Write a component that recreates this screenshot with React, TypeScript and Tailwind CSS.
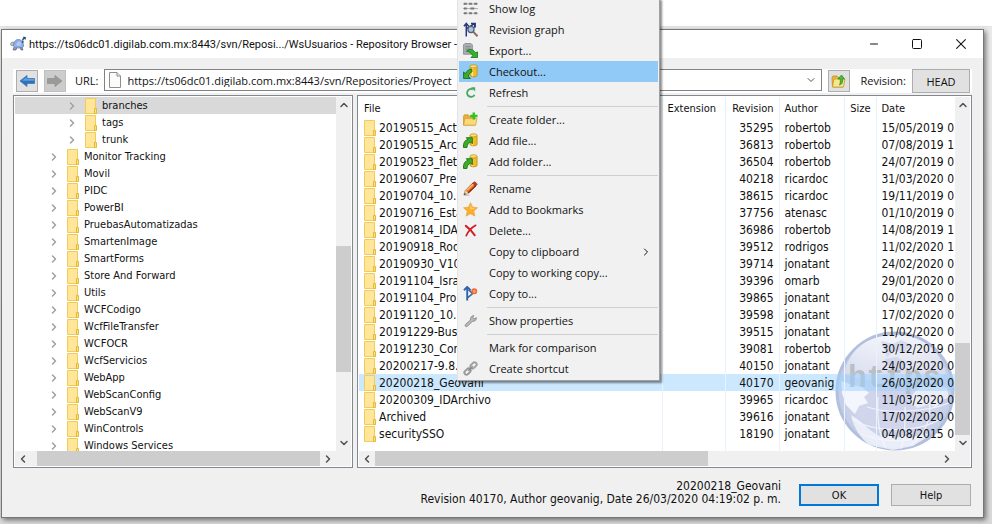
import { useState } from 'react'
import type { ReactNode } from 'react'
import { ChevronDown, ChevronLeft, ChevronRight, ChevronUp, Minus, Square, X } from 'lucide-react'


// types
type TreeNode = {
   name: string,
   level: number
}

type FileRow = {
   name: string,
   revision: number,
   author: string,
   date: string
}

type MenuItem = {
   label: string,
   icon?: ReactNode,
   submenu?: boolean
}


// - DATA -
const treeNodes: TreeNode[] = [
   { name: 'branches', level: 2 },
   { name: 'tags', level: 2 },
   { name: 'trunk', level: 2 },
   { name: 'Monitor Tracking', level: 1 },
   { name: 'Movil', level: 1 },
   { name: 'PIDC', level: 1 },
   { name: 'PowerBI', level: 1 },
   { name: 'PruebasAutomatizadas', level: 1 },
   { name: 'SmartenImage', level: 1 },
   { name: 'SmartForms', level: 1 },
   { name: 'Store And Forward', level: 1 },
   { name: 'Utils', level: 1 },
   { name: 'WCFCodigo', level: 1 },
   { name: 'WcfFileTransfer', level: 1 },
   { name: 'WCFOCR', level: 1 },
   { name: 'WcfServicios', level: 1 },
   { name: 'WebApp', level: 1 },
   { name: 'WebScanConfig', level: 1 },
   { name: 'WebScanV9', level: 1 },
   { name: 'WinControls', level: 1 },
   { name: 'Windows Services', level: 1 },
]

const files: FileRow[] = [
   { name: '20190515_Act', revision: 35295, author: 'robertob', date: '15/05/2019 0' },
   { name: '20190515_Arc', revision: 36813, author: 'robertob', date: '07/08/2019 1' },
   { name: '20190523_flet', revision: 36504, author: 'robertob', date: '24/07/2019 0' },
   { name: '20190607_Pre', revision: 40218, author: 'ricardoc', date: '31/03/2020 0' },
   { name: '20190704_10.', revision: 38615, author: 'ricardoc', date: '19/11/2019 0' },
   { name: '20190716_Esta', revision: 37756, author: 'atenasc', date: '01/10/2019 0' },
   { name: '20190814_IDA', revision: 36986, author: 'robertob', date: '14/08/2019 1' },
   { name: '20190918_Rod', revision: 39512, author: 'rodrigos', date: '11/02/2020 1' },
   { name: '20190930_V10', revision: 39714, author: 'jonatant', date: '24/02/2020 0' },
   { name: '20191104_Isra', revision: 39396, author: 'omarb', date: '29/01/2020 0' },
   { name: '20191104_Pro', revision: 39865, author: 'jonatant', date: '04/03/2020 0' },
   { name: '20191120_10.', revision: 39598, author: 'jonatant', date: '17/02/2020 0' },
   { name: '20191229-Busc', revision: 39515, author: 'jonatant', date: '11/02/2020 0' },
   { name: '20191230_Con', revision: 39081, author: 'robertob', date: '30/12/2019 0' },
   { name: '20200217-9.8.', revision: 40150, author: 'jonatant', date: '24/03/2020 0' },
   { name: '20200218_Geovani', revision: 40170, author: 'geovanig', date: '26/03/2020 0' },
   { name: '20200309_IDArchivo', revision: 39965, author: 'ricardoc', date: '11/03/2020 0' },
   { name: 'Archived', revision: 39616, author: 'jonatant', date: '17/02/2020 0' },
   { name: 'securitySSO', revision: 18190, author: 'jonatant', date: '04/08/2015 0' },
]


// - ICONS -
function FolderIcon() {
   return (
      <svg className='h-4 w-3 shrink-0' viewBox='0 0 12 16'>
         <path d='M.5.5h10v15H.5z' fill='#ffe694' stroke='#efcc5c' />
         <path d='M2 2h7v12H2z' fill='#ffe69a' />
         <path d='M9.5 15.5v-5h2v5z' fill='#ffe07a' stroke='#e3b93a' />
      </svg>
   )
}

function TurtleIcon() {
   return (
      <svg className='h-4 w-4 shrink-0' viewBox='0 0 16 16'>
         <path d='M4 11l-1 3h3l1-2M10 11l1 3h2l-1-3' fill='#8b97a8' stroke='#5c6a80' strokeWidth='.7' />
         <ellipse cx='3' cy='8' rx='2.5' ry='2' fill='#b9c0cb' stroke='#818ca0' strokeWidth='.7' />
         <path d='M3.500 10c0-4 2-6.500 5-6.500s5 3 5 7c-2 2-8 2-10-.5z' fill='#94b6ee' stroke='#6079a8' strokeWidth='.8' />
         <path d='M5.500 8l2-3 3 0 1.500 3-2 2.500H7z' fill='#b2cbf6' stroke='#7596cf' strokeWidth='.6' />
         <path d='M12.500 4.500l1.500-3 1 1 .5-1.500M13 5l-.5 2' fill='none' stroke='#2b4f7e' strokeWidth='1.500' />
      </svg>
   )
}

function ArrowIcon({ forward = false }: { forward?: boolean }) {
   return (
      <svg className='h-4 w-4' viewBox='0 0 16 16'>
         {forward
            ? <path d='M.5 5.500H8V2.500L15 8l-7 5.500v-3H.5z' fill='#9a9a9a' stroke='#929292' strokeWidth='.8' />
            : <>
               <path d='M15.500 5.500H8V2.500L1 8l7 5.500v-3h7.500z' fill='#2f72bb' stroke='#3a78b8' strokeWidth='.8' />
               <path d='M15 6H7.500V4L3 7.700h12z' fill='#5ea3dc' />
            </>}
      </svg>
   )
}

function PageIcon() {
   return (
      <svg className='h-4 w-3 shrink-0' viewBox='0 0 12 16'>
         <path d='M.5.5h7.500l3.500 3.500v11.500H.5z' fill='#fbfbfb' stroke='#8e8e8e' />
         <path d='M8 .5V4h3.500' fill='#e8e8e8' stroke='#8e8e8e' />
      </svg>
   )
}

function FolderUpIcon() {
   return (
      <svg className='h-4 w-4' viewBox='0 0 16 16'>
         <path d='M1 4.500l1-1.500h4l1 1.500h5V14H1.500z' fill='#e6b93e' stroke='#b98e22' strokeWidth='.8' />
         <path d='M1.500 14L3 6h5l1-1 5 1-1.500 8z' fill='#fbe58d' stroke='#c79d2e' strokeWidth='.8' />
         <path d='M8.500 12c3-1 3.500-3 3-6H13.500L10.500 2 7 6h2c.5 2 .5 4-.5 6z' fill='#4dbb3c' stroke='#228a20' strokeWidth='.7' />
      </svg>
   )
}

function LogIcon() {
   return (
      <svg className='size-[15px]' viewBox='0 0 16 16' stroke='#b2b2b2' strokeWidth='1.200'>
         <path d='M0 3h16M0 8h16M0 13h16' />
         <path d='M1 3h3M6.500 3h3M12 3h3M1 8h3M8 8h4M1 13h3M6.500 13h3M12 13h3' stroke='#777' strokeWidth='2.200' />
      </svg>
   )
}

function GraphIcon() {
   return (
      <svg className='size-[15px]' viewBox='0 0 16 16' fill='none'>
         <path d='M3.500 15.500V2M1 4.500L3.500 1.500 6 4.500M3.500 7L12 2M8.500 1.500h4.500v4M12.500 2v4' stroke='#26397e' strokeWidth='1.600' />
         <circle cx='8.500' cy='8' r='3.300' fill='#a9c4de' stroke='#525d78' strokeWidth='1.300' />
         <path d='M11 10.500l4.500 4.700' stroke='#8d6a62' strokeWidth='2.200' />
      </svg>
   )
}

function ExportIcon() {
   return (
      <svg className='size-[15px]' viewBox='0 0 16 16'>
         <path d='M.5 2l1.500-1.500h6.500L10 2v10H.5z' fill='#a9aeb0' stroke='#7d8386' strokeWidth='.8' />
         <path d='M2.500 4h5.500M2.500 6.500h5.500M2.500 9h3' stroke='#7f8588' />
         <path d='M4 8.500C7.500 5.500 11.500 7 13 10.500l2.500-1V15.500H8.500l2-2C9 10.500 7 9.500 4 8.500z' fill='#35b52b' stroke='#17761a' strokeWidth='.9' />
      </svg>
   )
}

// yellow repository cylinder with a green arrow that goes out of it or into it
function RepoIcon({ out = false }: { out?: boolean }) {
   return (
      <svg className='size-[15px]' viewBox='0 0 16 16'>
         <path d='M7.500 2.500v9.500c0 2.200 7.500 2.200 7.500 0V2.500z' fill='#f5bb22' stroke='#bd8711' strokeWidth='.8' />
         <path d='M10 4v9' stroke='#ffe88a' strokeWidth='1.500' />
         <ellipse cx='11.250' cy='2.500' rx='3.700' ry='1.700' fill='#ffdf70' stroke='#c4901c' strokeWidth='.8' />
         {out
            ? <path d='M.6 8.500l2 1.800C4 7.300 6.500 5.500 9.500 5.500v3C7.700 8.700 6.300 10.500 5.600 13l2.400 2.400H.6z' fill='#3bad27' stroke='#126b10' strokeWidth='.9' />
            : <path d='M.6 15.500C0 11 1.800 7.700 5.200 6.800L3.500 5H10v6.500L8.200 9.700C5.800 10.200 4.500 12.300 4.200 15.500z' fill='#3bad27' stroke='#126b10' strokeWidth='.9' />}
      </svg>
   )
}

function RefreshIcon() {
   return (
      <svg className='size-[15px]' viewBox='0 0 16 16' fill='none'>
         <path d='M10.500 4.700A4.200 4.200 0 1 0 12.300 10.500' stroke='#45a862' strokeWidth='2' />
         <path d='M8.500 2.500h4.500v4.500z' fill='#45a862' />
      </svg>
   )
}

function NewFolderIcon() {
   return (
      <svg className='size-[15px]' viewBox='0 0 16 16'>
         <path d='M.5 4.500L1.500 3h4l1.500 1.500h6v9.500H.5z' fill='#e7ae38' stroke='#c58d22' strokeWidth='.7' />
         <path d='M.7 14L2 7h13l-1.500 7z' fill='#fbd978' stroke='#d19f37' strokeWidth='.7' />
         <path d='M11.500 .5v7.500M7.700 4.200h7.800' stroke='#31c31e' strokeWidth='2.600' />
      </svg>
   )
}

function PencilIcon() {
   return (
      <svg className='size-[15px]' viewBox='0 0 16 16'>
         <path d='M1 15l1.500-5L10 2.500l3.500 3L6 13z' fill='#ed7b2a' stroke='#a84b14' strokeWidth='.7' />
         <path d='M10 2.500L12.500.7l2.800 2.500-1.800 2.300z' fill='#c23b2a' stroke='#7e2318' strokeWidth='.6' />
         <path d='M3.500 10L11 3.500' stroke='#ffc37c' strokeWidth='1.200' />
         <path d='M5.500 12.500l8-7.500' stroke='#8a2a18' strokeWidth='1.300' />
         <path d='M1 15l1.500-5L6 13z' fill='#d8d2bd' />
         <path d='M1 15l.7-2.300 1.600 1.500z' fill='#323232' />
         <path d='M2 15.200h5' stroke='#b5b5b5' />
      </svg>
   )
}

function StarIcon() {
   return (
      <svg className='size-[15px]' viewBox='0 0 16 16'>
         <path d='M8 .8l2.200 4.800 5.200.6-3.900 3.500 1.100 5.300L8 12.400 3.400 15l1.100-5.300L.6 6.200l5.200-.6z' fill='#fbae2b' stroke='#e3a03d' strokeWidth='.7' />
         <path d='M8 2.500l1.500 4 4 .5-5.500 1z' fill='#ffd46e' />
      </svg>
   )
}

function DeleteIcon() {
   return (
      <svg className='size-[15px]' viewBox='0 0 16 16' fill='none' stroke='#cf2026' strokeLinecap='round'>
         <path d='M3 3c3.500 2.500 7 6 9.500 10' strokeWidth='2.200' />
         <path d='M13.500 2.500C9 5 5.500 9 3.500 13.500' strokeWidth='1.800' />
      </svg>
   )
}

function BranchIcon() {
   return (
      <svg className='size-[15px]' viewBox='0 0 16 16' fill='none'>
         <path d='M4.500 15.500V2M1 4.500L4.500 1 8 4.500' stroke='#2c64a9' strokeWidth='2' />
         <path d='M5 12.500L10.500 8M6 4l4.500 4.500' stroke='#2c64a9' strokeWidth='1.700' />
         <circle cx='12' cy='5.500' r='2.400' fill='#ff9d50' stroke='#ee6a3a' strokeWidth='1.600' />
      </svg>
   )
}

function WrenchIcon() {
   return (
      <svg className='size-[15px]' viewBox='0 0 16 16'>
         <path d='M2.500 12.300L8 7.500C7.500 5 9 3 11.500 2.800L10.300 5l1.400 1.400L14.200 5C14.400 7.700 12.300 9.200 10 8.800L4.700 14.200c-1.400 1-3.200-.4-2.200-1.900z' fill='#bcbcbc' stroke='#808080' strokeWidth='.9' />
      </svg>
   )
}

function LinkIcon() {
   return (
      <svg className='size-[15px]' viewBox='0 0 16 16' fill='none'>
         <rect x='7.500' y='2.500' width='7.500' height='4.500' rx='2.200' transform='rotate(-45 11.200 4.800)' stroke='#a0a0a0' strokeWidth='2' />
         <rect x='1' y='9' width='7.500' height='4.500' rx='2.200' transform='rotate(-45 4.800 11.200)' stroke='#989898' strokeWidth='2' />
         <path d='M5.500 10.500l5-5' stroke='#8a8a8a' strokeWidth='1.600' />
      </svg>
   )
}

function GlobeMark() {
   return (
      <svg className='absolute right-0 bottom-0 h-[120px] w-[120px] opacity-85' viewBox='0 0 120 120' fill='none'>
         <defs>
            <radialGradient id='globe' cx='.5' cy='.5' r='.5'>
               <stop offset='0' stopColor='#c6cbe8' />
               <stop offset='.7' stopColor='#c9cfe9' />
               <stop offset='1' stopColor='#b9c5e4' />
            </radialGradient>
            <linearGradient id='shine' x1='0' y1='0' x2='0' y2='1'>
               <stop offset='0' stopColor='#fff' stopOpacity='.8' />
               <stop offset='1' stopColor='#fff' stopOpacity='.15' />
            </linearGradient>
         </defs>
         <circle cx='60' cy='60' r='58' fill='url(#globe)' stroke='#a5b6d8' strokeWidth='3' />
         <g stroke='#edf1fa' strokeWidth='1.200'>
            <path d='M17 88c22 14 66 14 88 0M32 76c20 7 60 5 82-4M27 103c20 9 48 9 66 0' />
            <path d='M43 66c-1 16 0 36 8 51M70 76c0 16 0 28-4 42M94 66c3 18-2 38-19 48' />
         </g>
         <path d='M6 50l12 4 9 2 7 6-5 4 4 6-9 3-4 8-9-9-4-12z' fill='#f2f5fc' />
         <path d='M74 72l4-9 8-8 13-2 13 4 2 10-8 2-5 8-6-4-12 4z' fill='#edf1fa' fillOpacity='.8' />
         <path d='M16 84c14 8 18 17 31 22l8-2 5 4 8-4 9 3 9-4 6 3-14 9-20 4-24-5C26 107 19 98 16 84z' fill='#f2f5fc' fillOpacity='.8' />
         <path d='M9 43C15 15 36 4 60 4s45 12 51 39C92 53 28 53 9 43z' fill='url(#shine)' />
         <path d='M46 10l12 3 8-4 11 5-7 7-10-1-8 6zM50 28l12-2 10 6-4 8-12-2z' fill='#b3bfe0' fillOpacity='.5' />
         <text x='13' y='56' fontSize='31' fontWeight='bold' fontFamily='"Liberation Mono", monospace' fill='#a4a9ae' fillOpacity='.8'>https</text>
      </svg>
   )
}


// - CONTEXT MENU -
const menuGroups: MenuItem[][] = [
   [
      { label: 'Show log', icon: <LogIcon /> },
      { label: 'Revision graph', icon: <GraphIcon /> },
      { label: 'Export...', icon: <ExportIcon /> },
      { label: 'Checkout...', icon: <RepoIcon out /> },
      { label: 'Refresh', icon: <RefreshIcon /> },
   ],
   [
      { label: 'Create folder...', icon: <NewFolderIcon /> },
      { label: 'Add file...', icon: <RepoIcon /> },
      { label: 'Add folder...', icon: <RepoIcon /> },
   ],
   [
      { label: 'Rename', icon: <PencilIcon /> },
      { label: 'Add to Bookmarks', icon: <StarIcon /> },
      { label: 'Delete...', icon: <DeleteIcon /> },
      { label: 'Copy to clipboard', submenu: true },
      { label: 'Copy to working copy...' },
      { label: 'Copy to...', icon: <BranchIcon /> },
   ],
   [
      { label: 'Show properties', icon: <WrenchIcon /> },
   ],
   [
      { label: 'Mark for comparison' },
      { label: 'Create shortcut', icon: <LinkIcon /> },
   ],
]

function ContextMenu() {

   const [active, setActive] = useState('Checkout...') // Highlighted item

   return (
      <div role='menu' className='absolute -top-0.5 left-[457px] z-20 w-[203px] border-r border-b border-l border-[#a0a0a0] border-l-[#e3e3e3] bg-[#f1f1f1] px-px pb-px font-["Open_Sans",sans-serif] text-[11px] shadow-[2px_2px_2px_rgba(0,0,0,0.45)]'>
         {menuGroups.map((group, i) => (
            <div key={i}>
               {i > 0 && <div className='flex h-1.5 items-center pl-7'><div className='h-px w-full bg-[#cfcfcf]' /></div>}
               {group.map((item) => (
                  <button key={item.label} role='menuitem' onMouseEnter={() => setActive(item.label)} className={`flex h-[21px] w-full items-center text-left ${active === item.label ? 'bg-[#91c9f7]' : ''}`}>
                     <span className='flex w-[30px] pl-1'>{item.icon}</span>
                     <span className='flex-1'>{item.label}</span>
                     {item.submenu && <ChevronRight className='mr-1.5 size-3' />}
                  </button>
               ))}
            </div>
         ))}
      </div>
   )
}


// - SCROLL BARS -
// pad = space before the thumb, thumb = its length
function VerticalBar({ pad, thumb }: { pad: number, thumb: number }) {
   return (
      <div className='flex w-[15px] shrink-0 flex-col items-center bg-[#f0f0f0]'>
         <button aria-label='Scroll up' className='flex h-4 items-center'><ChevronUp className='size-3 text-[#505050]' strokeWidth={3} /></button>
         <div className='flex-1 self-stretch'>
            <div className='bg-[#cdcdcd]' style={{ marginTop: pad, height: thumb }} />
         </div>
         <button aria-label='Scroll down' className='flex h-4 items-center'><ChevronDown className='size-3 text-[#505050]' strokeWidth={3} /></button>
      </div>
   )
}

function HorizontalBar({ pad, thumb }: { pad: number, thumb: string }) {
   return (
      <div className='flex h-[15px] items-center bg-[#f0f0f0] pr-[15px]'>
         <button aria-label='Scroll left' className='flex w-4 justify-center'><ChevronLeft className='size-3 text-[#505050]' strokeWidth={3} /></button>
         <div className='flex-1 self-stretch' style={{ paddingLeft: pad }}>
            <div className='h-full bg-[#cdcdcd]' style={{ width: thumb }} />
         </div>
         <button aria-label='Scroll right' className='flex w-4 justify-center'><ChevronRight className='size-3 text-[#505050]' strokeWidth={3} /></button>
      </div>
   )
}


// - TREE -
function Tree() {

   const [selected, setSelected] = useState('branches') // Selected folder

   return (
      <div className='w-[340px] shrink-0 border border-[#828790] bg-white p-px'>
         <div className='flex h-[354px]'>
            <ul role='tree' className='min-w-0 flex-1 overflow-hidden'>
               {treeNodes.map((node) => (
                  <li key={node.name} role='treeitem' aria-selected={selected === node.name}>
                     <button onClick={() => setSelected(node.name)} className={`flex h-[17px] w-full items-center ${node.level === 2 ? 'pl-[51px]' : 'pl-[33px]'} ${selected === node.name ? 'bg-[#d9d9d9]' : ''}`}>
                        <ChevronRight className='size-3 text-[#a0a0a0]' strokeWidth={3} />
                        <span className='mr-[5px] ml-[7px] flex'><FolderIcon /></span>
                        {node.name}
                     </button>
                  </li>
               ))}
            </ul>
            <VerticalBar pad={133} thumb={126} />
         </div>
         <HorizontalBar pad={6} thumb='100%' />
      </div>
   )
}


// - FILE LIST -
function FileList() {

   const [selected, setSelected] = useState('20200218_Geovani') // Selected file

   return (
      <div className='min-w-0 flex-1 border border-[#828790] bg-white p-px'>
         <div className='flex h-[354px]'>
            <div className='relative min-w-0 flex-1 overflow-hidden'>
               <GlobeMark />
               <table className='relative h-full w-full table-fixed'>
                  <colgroup>
                     <col />
                     <col className='w-[63px]' />
                     <col className='w-[54px]' />
                     <col className='w-[65px]' />
                     <col className='w-8' />
                     <col className='w-[79px]' />
                  </colgroup>
                  <thead>
                     <tr className='h-[22px] text-left *:border-r *:border-[#e5f0fa] *:px-[5px] *:pb-0 *:font-normal *:last:border-r-0'>
                        <th>File</th>
                        <th>Extension</th>
                        <th className='text-right'>Revision</th>
                        <th>Author</th>
                        <th className='text-right'>Size</th>
                        <th>Date</th>
                     </tr>
                  </thead>
                  <tbody className='text-xs'>
                     {files.map((file) => (
                        <tr key={file.name} onClick={() => setSelected(file.name)} className={`h-[17px] whitespace-nowrap *:overflow-hidden *:border-r *:border-[#eaf3fc] *:px-[5px] *:py-0 *:leading-4 *:last:border-r-0 *:last:pr-0 ${selected === file.name ? 'bg-[#99d1ff]/50' : ''}`}>
                           <td>
                              <span className='flex h-[17px] items-center gap-[3px]'><FolderIcon />{file.name}</span>
                           </td>
                           <td />
                           <td className='text-right'>{file.revision}</td>
                           <td>{file.author}</td>
                           <td />
                           <td>{file.date}</td>
                        </tr>
                     ))}
                     <tr className='*:border-r *:border-[#eaf3fc] *:p-0 *:last:border-r-0'>
                        <td /><td /><td /><td /><td /><td />
                     </tr>
                  </tbody>
               </table>
            </div>
            <VerticalBar pad={230} thumb={92} />
         </div>
         <HorizontalBar pad={0} thumb='59%' />
      </div>
   )
}


export default function App() {

   const [url, setUrl] = useState('https://ts06dc01.digilab.com.mx:8443/svn/Repositories/Proyect') // Repository URL

   return (
      <div className='relative min-h-screen overflow-hidden bg-white pt-[26px] font-["DejaVu_Sans_Condensed","DejaVu_Sans",sans-serif] text-[11px] leading-[13px] text-[#111]'>

         {/* Window behind the dialog */}
         <div className='border-t border-[#e4e4e4] bg-[#ebebeb] bg-linear-to-b from-[#ececec] to-[#dadada] pt-0.5 pr-2 pb-1.5 pl-px'>

            {/* Dialog */}
            <div className='border border-[#777] bg-[#f0f0f0] shadow-[2px_2px_5px_rgba(0,0,0,0.5)]'>

               {/* Title bar */}
               <header className='flex h-7 items-center bg-white pl-2'>
                  <TurtleIcon />
                  <h1 className='ml-[3px] flex-1 font-[Roboto,sans-serif] text-[11px]'>https://ts06dc01.digilab.com.mx:8443/svn/Reposi.../WsUsuarios - Repository Browser -</h1>
                  <div className='flex gap-[31px] pr-[15px]'>
                     <button aria-label='Minimize'><Minus className='size-3' strokeWidth={2} /></button>
                     <button aria-label='Maximize'><Square className='size-3' strokeWidth={2} /></button>
                     <button aria-label='Close'><X className='size-3.5 scale-125' strokeWidth={1.5} /></button>
                  </div>
               </header>

               <main className='px-[11px] pt-[11px]'>
                  {/* Toolbar */}
                  <div className='mb-0.5 flex h-6 items-start bg-white pr-0.5 pl-[3px] font-["Open_Sans",sans-serif]'>
                     <button aria-label='Back' className='mt-px mr-1.5 flex size-[22px] items-center justify-center border border-[#adadad] bg-[#e1e1e1]'><ArrowIcon /></button>
                     <button aria-label='Forward' disabled className='mt-px flex size-[22px] items-center justify-center border border-[#bfbfbf] bg-[#cccccc]'><ArrowIcon forward /></button>
                     <label htmlFor='url' className='mt-1 mr-1.5 ml-[9px] leading-4'>URL:</label>
                     <div className='flex h-[22px] min-w-0 flex-1 items-center border border-[#828282] bg-white px-1'>
                        <PageIcon />
                        <input id='url' value={url} onChange={(e) => setUrl(e.target.value)} className='ml-1.5 min-w-0 flex-1 outline-none' />
                        <button aria-label='Show history'><ChevronDown className='size-3 text-[#555]' /></button>
                     </div>
                     <button aria-label='Parent folder' className='mt-px ml-1.5 flex size-[22px] items-center justify-center border border-[#adadad] bg-[#e1e1e1]'><FolderUpIcon /></button>
                     <label htmlFor='revision' className='mt-1 mr-1.5 ml-2.5 leading-4'>Revision:</label>
                     <button id='revision' className='h-6 w-[58px] border border-[#adadad] bg-[#e1e1e1]'>HEAD</button>
                  </div>

                  {/* Panels */}
                  <div className='flex gap-1'>
                     <Tree />
                     <FileList />
                  </div>

                  {/* Status & buttons */}
                  <footer className='flex items-start justify-end pt-3 pr-px pb-[11px]'>
                     <p className='mr-[18px] text-right text-xs leading-[13px]'>
                        20200218_Geovani<br />
                        Revision 40170, Author geovanig, Date 26/03/2020 04:19:02 p. m.
                     </p>
                     <button className='mt-1 mr-3 h-[22px] w-20 border-2 border-[#0078d7] bg-[#e1e1e1]'>OK</button>
                     <button className='mt-1 h-[22px] w-20 border border-[#adadad] bg-[#e1e1e1]'>Help</button>
                  </footer>
               </main>
            </div>
         </div>

         <ContextMenu />
      </div>
   )
}
